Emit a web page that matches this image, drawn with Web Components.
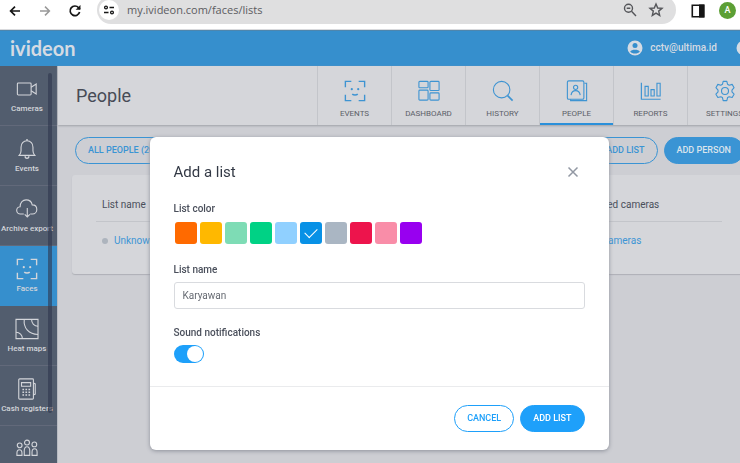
<!DOCTYPE html>
<html lang="en">
<head>
<meta charset="utf-8">
<title>ivideon – People</title>
<style>
html, body { margin: 0; height: 100%; }
body {
  --blue: #368fcd; --accent: #1ea0fa; --ink: #4a4f5a; --line: #c3c5ca;
  --page: #cdced3; --panel: #d5d6da; --side: #525d6e;
  font: 10px/14px Roboto, "Liberation Sans", sans-serif; color: var(--ink);
  overflow: hidden; background: var(--page);
}
</style>
</head>
<body>
<face-app></face-app>
<script>
const define = (name, html, setup) => customElements.define(name, class extends HTMLElement {
  connectedCallback() {
    if (this.shadowRoot) return;
    const root = this.attachShadow({ mode: "open" });
    const t = document.createElement("template");
    t.innerHTML = "<style>*{box-sizing:border-box}</style>" + html;
    root.append(t.content.cloneNode(true));
    if (setup) setup(this, root);
  }
});

const icons = {
  back: ['0 0 16 16', '<path d="M13 8H4M8 3.600 3.600 8 8 12.400" stroke-width="1.700"/>'],
  forward: ['0 0 16 16', '<path d="M3 8h9M8 3.600 12.400 8 8 12.400" stroke-width="1.500"/>'],
  reload: ['0 0 16 16', '<path d="M12.600 9A4.800 4.800 0 1 1 11.600 4.700L13 6" stroke-width="1.700"/><path d="M13.200 2.500v4H9.200z" fill="currentColor" stroke-width=".5"/>'],
  tune: ['0 0 12 12', '<path d="M6.500 3.500H11M1 8.500h4.500" stroke-width="1.500"/><circle cx="3" cy="3.500" r="1.400" stroke-width="1.300"/><circle cx="9" cy="8.500" r="1.400" stroke-width="1.300"/>'],
  zoomout: ['0 0 16 16', '<circle cx="6.500" cy="6.300" r="4" stroke-width="1.400"/><path d="M9.500 9.300 14 14M4.700 6.300h3.600" stroke-width="1.400"/>'],
  star: ['0 0 16 16', '<path d="m8 2 1.700 4 4.300.3-3.300 2.800 1 4.300L8 11.100l-3.700 2.300 1-4.300L2 6.300 6.300 6z" stroke-width="1.400"/>'],
  panel: ['0 0 14 14', '<path d="M2 2h10v10H2z" stroke-width="1.400"/><path d="M8.500 2H12v10H8.500z" fill="currentColor"/>'],
  user: ['0 0 16 16', '<circle cx="8" cy="8" r="7.500" fill="currentColor" stroke="none"/><g fill="#368fcd" stroke="none"><circle cx="8" cy="5.500" r="2.500"/><path d="M3.200 11.500C4.500 9.200 11.500 9.200 12.800 11.500 11 14.200 5 14.200 3.200 11.500z"/></g>'],
  help: ['0 0 16 16', '<circle cx="8" cy="8" r="7.500" fill="currentColor" stroke="none"/>'],
  camera: ['0 0 24 24', '<rect x="1.500" y="5.500" width="15" height="13" rx="1"/><path d="m16.500 10 5.500-3.500v11L16.500 14"/>'],
  bell: ['0 0 24 24', '<path d="M3.500 19h17c-1.500-1.500-2-3-2-5v-4c0-4-2.500-7-6.500-7s-6.500 3-6.500 7v4c0 2-.5 3.500-2 5z"/><path d="M12 1v2M10 20c0 3 4 3 4 0" stroke-width="1.500"/>'],
  cloud: ['0 0 24 24', '<path d="M8.500 17.500H5a4 4 0 0 1-.5-8C4.500 4.500 7.500 2 11 2c3.500 0 6 2 6.700 5.500 3 0 5 2.200 5 5s-2 5-4.700 5h-2.500"/><path d="M12.300 11v9.500M9.500 17.800l2.800 2.800 2.800-2.800"/>'],
  face: ['0 0 24 24', '<path d="M1.500 8V1.500H8M16 1.500h6.500V8M22.500 16v6.500H16M8 22.500H1.500V16" stroke-width="1.500"/><g fill="currentColor" stroke="none"><circle cx="8.500" cy="10" r="1.200"/><circle cx="15.500" cy="10" r="1.200"/></g><path d="M9 15.500c1.500 1.200 4.500 1.200 6 0" stroke-width="1.700"/>'],
  heat: ['0 0 26 24', '<path d="M1 1.500h24v21H1z"/><path d="M10 1.500C9 11 15 18 25 18M18 1.500c0 4.500 3 7.500 7 7.500M1 15.500c4 0 7 3 7 7"/>'],
  cash: ['0 0 24 24', '<rect x="3" y="1" width="16" height="22" rx="1"/><path d="M6 5h10v4H6zM19 5.500l2 1v11l-2 1"/><path d="M7 12.500h8.500M7 15.500h8.500M7 18.500h8.500" stroke-width="1.800" stroke-dasharray="1.800 1.500"/>'],
  people: ['0 0 24 24', '<circle cx="4" cy="8" r="2.600"/><circle cx="12" cy="5" r="2.700"/><circle cx="20" cy="7" r="2.600"/><path d="M1 19v-2.500c0-5 5.500-5 5.500 0V19zM9 19v-5c0-6 6-6 6 0v5zM17.500 19v-3.500c0-5 5.500-5 5.500 0V19z"/>'],
  dash: ['0 0 24 24', '<rect x="1" y="1.500" width="10" height="7" rx="1"/><rect x="1" y="11" width="10" height="11" rx="1"/><rect x="13" y="1.500" width="10" height="10" rx="1"/><rect x="13" y="14" width="10" height="8" rx="1"/>'],
  search: ['0 0 24 24', '<circle cx="10.500" cy="10.500" r="9"/><path d="m17 17 5.500 5.500" stroke-width="1.800"/>'],
  contact: ['0 0 24 24', '<rect x="1.500" y="1" width="18" height="20" rx="1.500"/><path d="M20 3.500h2.500v19H5v-1.500"/><circle cx="10.500" cy="8" r="2.300"/><path d="M5.500 16.500c1-6.500 9-6.500 10 0"/>'],
  bars: ['0 0 24 24', '<path d="M1.500 3v18h21" stroke-width="1.300"/><path d="M5.500 7h3.500v10.500H5.500zM12 10.500h3.500v7H12zM18.500 3.500H22v14h-3.500z"/>'],
  gear: ['0 0 24 24', '<circle cx="12" cy="12" r="3.800"/><path d="M10 1.500h4l.8 3.200 1.800 1 3.200-.9 2.100 3.600L19.600 11v2l2.300 2.500-2.100 3.600-3.200-.9-1.800 1-.8 3.300h-4l-.8-3.300-1.800-1-3.200.9-2.100-3.600L4.400 13v-2L2.100 8.400l2.100-3.600 3.200.9 1.800-1z" stroke-linejoin="round"/>'],
  close: ['0 0 12 12', '<path d="m1.500 1.500 9 9M10.500 1.500l-9 9" stroke-width="1.500"/>']
};

define("ui-icon", `<style>
  :host { display: block; width: 16px; height: 16px; flex: none }
  svg { display: block; width: 100%; height: 100% }
</style><svg fill="none" stroke="currentColor" stroke-width="1.200" aria-hidden="true"></svg>`, (el, root) => {
  const [box, body] = icons[el.getAttribute("name")];
  const svg = root.querySelector("svg");
  svg.setAttribute("viewBox", box);
  svg.innerHTML = body;
});

const prependIcon = (el, root) => {
  const icon = document.createElement("ui-icon");
  icon.setAttribute("name", el.getAttribute("icon"));
  root.querySelector("a").prepend(icon);
};

define("browser-bar", `<style>
  :host { display: flex; align-items: flex-start; height: 30px; background: #fff; border-bottom: 1px solid #d9dadd; color: #161616; padding-right: 4px }
  button { border: 0; background: none; padding: 0; color: inherit; display: block }
  nav { display: flex; gap: 14px; padding: 3px 14px 0 7px }
  .dim { color: #999 }
  .bar { flex: 1; display: flex; align-items: center; gap: 10px; height: 28px; margin-top: -4px; padding: 0 12px 0 2px; background: #dfdfe0; border-radius: 14px; min-width: 0 }
  .site { display: grid; place-items: center; width: 20px; height: 20px; border-radius: 50%; background: #fff }
  .site ui-icon { width: 12px; height: 12px }
  input { flex: 1; min-width: 0; border: 0; padding: 0; margin-left: -2px; background: none; font: 11px/16px "Open Sans", "Noto Sans", sans-serif; color: #5c5c60 }
  .end { color: #55565a }
  .panel { margin: 3px 0 0 14px }
  .avatar { margin: 2px 0 0 13px; width: 17px; height: 17px; border-radius: 50%; background: #5c9f35; color: #fff; font: 500 9px/17px Roboto, sans-serif; text-align: center }
</style>
<nav><button aria-label="Back"><ui-icon name="back"></ui-icon></button><button class="dim" aria-label="Forward"><ui-icon name="forward"></ui-icon></button><button aria-label="Reload"><ui-icon name="reload"></ui-icon></button></nav>
<div class="bar"><button class="site" aria-label="Site information"><ui-icon name="tune"></ui-icon></button>
<input aria-label="Address" value="my.ivideon.com/faces/lists">
<button class="end" aria-label="Zoom"><ui-icon name="zoomout"></ui-icon></button><button class="end" aria-label="Bookmark"><ui-icon name="star"></ui-icon></button></div>
<button class="panel" aria-label="Side panel"><ui-icon name="panel"></ui-icon></button><button class="avatar">A</button>`);

define("brand-header", `<style>
  :host { display: flex; align-items: center; justify-content: space-between; height: 36px; padding: 0 10px; background: var(--blue); color: #d5dbe3; box-shadow: inset 0 1px #4d86ae }
  a { color: inherit; text-decoration: none }
  .logo { font: 700 20px/36px Lato, sans-serif }
  div, .user { display: flex; align-items: center; gap: 7px }
  .user { font-weight: 500 }
  button { border: 0; padding: 0; background: none; color: inherit; margin-left: 12px }
</style><a class="logo" href="#">ivideon</a>
<div><a class="user" href="#"><ui-icon name="user"></ui-icon>cctv@ultima.id</a><button aria-label="Help"><ui-icon name="help"></ui-icon></button></div>`);

define("side-item", `<style>
  :host { display: block; height: 60px; border-bottom: 1px solid #62697a }
  :host([active]) { background: var(--blue); border-color: var(--blue) }
  a { display: flex; flex-direction: column; align-items: center; height: 100%; padding: 12px 3px 0 0; color: #d3d5da; font: 500 8px/12px Roboto, sans-serif; text-decoration: none; white-space: nowrap }
  ui-icon { width: 24px; height: 22px; margin-bottom: 3px }
</style><a href="#"><slot></slot></a>`, prependIcon);

define("side-nav", `<style>
  :host { display: block; position: relative; flex: none; width: 57px; background: var(--side); box-shadow: 1px 0 #b8bbc2; overflow: hidden }
  .thumb { position: absolute; top: 7px; bottom: 50px; right: 5px; width: 4px; border-radius: 2px; background: #2e364d99 }
</style><nav><slot></slot></nav><div class="thumb"></div>`);

define("nav-tab", `<style>
  :host { display: block; flex: none; width: 74px; border-left: 1px solid var(--line) }
  a { display: flex; flex-direction: column; align-items: center; height: 100%; padding-top: 14px; gap: 6px; color: #5c6068; font: 8px/12px Roboto, sans-serif; text-decoration: none }
  :host([active]) a { border-bottom: 2px solid #2b90da }
  ui-icon { width: 24px; height: 22px; color: #3e94d2 }
</style><a href="#"><slot></slot></a>`, prependIcon);

define("page-header", `<style>
  :host { display: flex; justify-content: space-between; height: 59px; padding: 0 1px 0 18px; background: var(--panel); box-shadow: 0 1px 2px #9ea1a8; position: relative }
  h1 { margin: 0; font: 400 18px/60px Roboto, sans-serif; color: #474b56 }
  nav { display: flex }
</style><h1><slot name="title"></slot></h1><nav><slot></slot></nav>`);

define("pill-button", `<style>
  :host { display: block }
  button { display: block; height: 27px; padding: 0 12px; border: 1px solid var(--pill, var(--accent)); border-radius: 14px; background: none; color: var(--pill, var(--accent)); font: 500 9px/25px Roboto, sans-serif; white-space: nowrap }
  :host([solid]) button { background: var(--pill, var(--accent)); color: var(--pill-text, #fff) }
</style><button type="button"><slot></slot></button>`);

define("list-card", `<style>
  :host { display: block; background: var(--panel); border-radius: 3px; box-shadow: 0 1px 1px #aeb0b6; padding: 12px 24px 18px }
  table { width: 100%; border-collapse: collapse; table-layout: fixed }
  th, td { text-align: left; padding: 0 6px; font-weight: 400; height: 34px }
  th { padding-top: 2px }
  td { height: 35px; padding-top: 4px }
  th { border-bottom: 1px solid var(--line) }
  th:last-child { width: 139px }
  a { color: #3c95d5; text-decoration: none }
  .dot { display: inline-block; width: 6px; height: 6px; margin-right: 6px; border-radius: 50%; background: #adb4bd }
</style><table><thead><tr><th>List name</th><th>Linked cameras</th></tr></thead>
<tbody><tr><td><span class="dot"></span><a href="#">Unknown</a></td><td><a href="#">All cameras</a></td></tr></tbody></table>`);

define("color-picker", `<style>
  :host { display: block; padding-bottom: 2px }
  fieldset { border: 0; margin: 0; padding: 0; min-width: 0 }
  legend { padding: 0; margin-bottom: 6px; font-weight: 500 }
  div { display: flex; gap: 3px; padding-left: 1px }
  input { appearance: none; display: grid; place-items: center; width: 22px; height: 22px; margin: 0; border-radius: 3px; background: var(--c) }
  input:checked::after { content: ""; width: 11px; height: 6px; margin-bottom: 3px; border: solid #fff; border-width: 0 0 1px 1px; transform: rotate(-45deg) }
</style><fieldset><legend>List color</legend><div></div></fieldset>`, (el, root) => {
  const colors = { Orange: "#ff6a00", Amber: "#ffb800", Mint: "#7edcb5", Green: "#00d285", Sky: "#90d0ff", Blue: "#0891e6", Gray: "#aab6c3", Red: "#ed144c", Pink: "#f98da8", Purple: "#9800f0" };
  for (const [name, c] of Object.entries(colors)) {
    const i = document.createElement("input");
    i.type = "radio"; i.name = "color"; i.checked = name === "Blue";
    i.setAttribute("aria-label", name);
    i.style.setProperty("--c", c);
    root.querySelector("div").append(i);
  }
});

define("text-field", `<style>
  :host { display: block }
  label { display: block; margin-bottom: 5px; font-weight: 500 }
  input { display: block; width: 100%; height: 27px; padding: 0 8px; border: 1px solid #d9dbdf; border-radius: 3px; background: #fff; color: #666a72; font: 10px/14px Roboto, sans-serif }
</style><label for="f"><slot></slot></label><input id="f">`, (el, root) => {
  root.querySelector("input").value = el.getAttribute("value");
});

define("toggle-field", `<style>
  :host { display: block }
  label { display: block; margin-bottom: 5px; font-weight: 500 }
  input { appearance: none; display: flex; width: 30px; height: 18px; margin: 0; padding: 1px; border-radius: 9px; background: #b8bec6 }
  input:checked { background: var(--accent); justify-content: flex-end }
  input::after { content: ""; width: 16px; height: 16px; border-radius: 50%; background: #fff }
</style><label for="t"><slot></slot></label><input id="t" type="checkbox" role="switch" checked>`);

define("modal-dialog", `<style>
  :host { display: flex; flex-direction: column; width: 100%; max-width: 459px; background: #fff; border-radius: 6px; box-shadow: 0 1px 4px #8d909a; color: #4b505c }
  header { display: flex; align-items: center; justify-content: space-between; padding: 23px 24px 0 }
  h2 { margin: 0; font: 400 15px/24px Roboto, sans-serif; color: #333945 }
  header button { border: 0; background: none; padding: 0 6px; color: #9298a3 }
  header ui-icon { width: 12px; height: 12px }
  section { display: flex; flex-direction: column; padding: 18px 24px 23px; gap: 17px; border-bottom: 1px solid #eaebed }
  footer { display: flex; justify-content: flex-end; gap: 6px; padding: 18px 24px }
</style><header><h2><slot name="title"></slot></h2><button aria-label="Close"><ui-icon name="close"></ui-icon></button></header>
<section><slot></slot></section><footer><slot name="actions"></slot></footer>`);

define("face-app", `<style>
  :host { display: flex; flex-direction: column; min-height: 100vh }
  .app { display: flex; flex-direction: column; flex: 1; width: calc(100% + 22px) }
  .body { display: flex; flex: 1 }
  side-nav { height: calc(100vh - 66px) }
  main { flex: 1; min-width: 0; padding-left: 1px }
  .tools { display: flex; gap: 6px; padding: 12px 18px 11px 17px; --pill: #3a94d4; --pill-text: #dbe4ec }
  .tools :first-child { margin-right: auto }
  list-card { margin: 0 16px 0 14px }
  .layer { position: fixed; inset: 0; display: flex; justify-content: center; align-items: flex-start; padding: 137px 12px 0 30px }
</style>
<browser-bar></browser-bar>
<div class="app"><brand-header></brand-header><div class="body">
<side-nav>
  <side-item icon="camera">Cameras</side-item><side-item icon="bell">Events</side-item>
  <side-item icon="cloud">Archive export</side-item><side-item icon="face" active>Faces</side-item>
  <side-item icon="heat">Heat maps</side-item><side-item icon="cash">Cash registers</side-item>
  <side-item icon="people"></side-item>
</side-nav>
<main><page-header><span slot="title">People</span>
  <nav-tab icon="face">EVENTS</nav-tab><nav-tab icon="dash">DASHBOARD</nav-tab><nav-tab icon="search">HISTORY</nav-tab>
  <nav-tab icon="contact" active>PEOPLE</nav-tab><nav-tab icon="bars">REPORTS</nav-tab><nav-tab icon="gear">SETTINGS</nav-tab>
</page-header>
<div class="tools"><pill-button>ALL PEOPLE (20)</pill-button><pill-button>ADD LIST</pill-button><pill-button solid>ADD PERSON</pill-button></div>
<list-card></list-card></main></div></div>
<div class="layer"><modal-dialog role="dialog" aria-label="Add a list"><span slot="title">Add a list</span>
  <color-picker></color-picker><text-field value="Karyawan">List name</text-field><toggle-field>Sound notifications</toggle-field>
  <pill-button slot="actions">CANCEL</pill-button><pill-button slot="actions" solid>ADD LIST</pill-button>
</modal-dialog></div>`);
</script>
</body>
</html>
